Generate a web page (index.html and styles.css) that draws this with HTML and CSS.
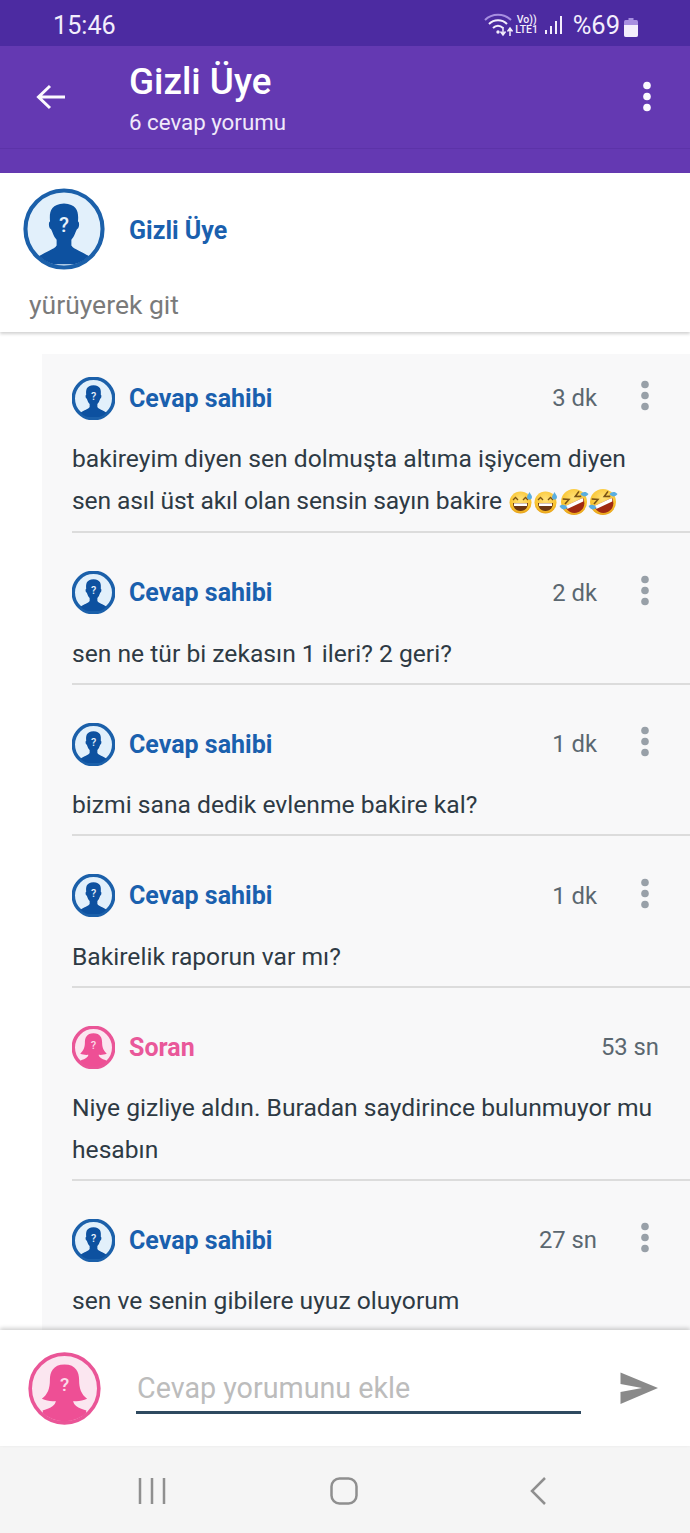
FILE: index.html
```html
<!DOCTYPE html>
<html lang="tr">
<head>
<meta charset="utf-8">
<title>Gizli Üye</title>
<link rel="stylesheet" href="styles.css">
</head>
<body>
<svg class="defs" width="0" height="0" aria-hidden="true">
  <defs>
    <clipPath id="c-in"><circle cx="50" cy="50" r="45"/></clipPath>
    <symbol id="male" viewBox="0 0 100 100">
      <circle class="ring" cx="50" cy="50" r="47" fill="#e2f0fb" stroke="#1b60aa"/>
      <path clip-path="url(#c-in)" fill="#0d51a0" d="M20 83C28 77 38 75 41 70L41 63C37 59 36 53 34 50C31 49 31 41 33 41C32 30 33 20 50 19C67 20 68 30 67 41C69 41 69 49 66 50C64 53 63 59 59 63L59 70C62 75 72 77 80 83L84 88C74 95 62 93 50 93C38 93 26 95 16 88Z"/>
      <text x="50" y="54" class="q" font-size="25">?</text>
    </symbol>
    <symbol id="female" viewBox="0 0 100 100">
      <circle class="ring" cx="50" cy="50" r="47" fill="#fbe6f0" stroke="#ea5597"/>
      <path clip-path="url(#c-in)" fill="#ee4f95" d="M50 17C66 17 70 28 70 38C70 50 73 58 81 64C75 67 67 68 62 67C62 72 68 77 80 80L76 100L24 100L20 80C32 77 38 72 38 67C33 68 25 67 19 64C27 58 30 50 30 38C30 28 34 17 50 17Z"/>
      <text x="50" y="54" class="q q-f" font-size="26">?</text>
    </symbol>
    <symbol id="dots" viewBox="0 0 8 32">
      <circle cx="4" cy="4.500" r="3.800"/><circle cx="4" cy="15.500" r="3.800"/><circle cx="4" cy="26.500" r="3.800"/>
    </symbol>
    <radialGradient id="gold" cx="50%" cy="35%" r="70%">
      <stop offset="0" stop-color="#ffe27a"/><stop offset="0.7" stop-color="#f9c32e"/><stop offset="1" stop-color="#e09512"/>
    </radialGradient>
    <symbol id="sweat" viewBox="0 0 24 24">
      <circle cx="11.500" cy="12.500" r="11" fill="url(#gold)"/>
      <path d="M4 10L6.500 7.500L9 10M14 10L16.500 7.500L19 10" fill="none" stroke="#7a5214" stroke-width="1.300"/>
      <path d="M4 13H19C19 18.500 15.500 21 11.500 21C7.500 21 4 18.500 4 13Z" fill="#6b3612"/>
      <path d="M5 13.300H18V16H5Z" fill="#fff"/>
      <path d="M20.500 2C21.800 4.500 23 5.500 23 7.200A2.500 2.500 0 0 1 18 7.200C18 5.500 19.200 4.500 20.500 2Z" fill="#5aaee0"/>
    </symbol>
    <symbol id="rofl" viewBox="0 0 30 30">
      <circle cx="15" cy="15" r="13" fill="url(#gold)"/>
      <g transform="rotate(-25 15 15)">
        <path d="M6 7.500L11.500 10.500L6 13M24 7.500L18.500 10.500L24 13" fill="none" stroke="#7a5214" stroke-width="1.600"/>
        <path d="M5 15H25C25 22 20.500 26 15 26C9.500 26 5 22 5 15Z" fill="#a02a12"/>
        <path d="M5.500 15H24.500C24.500 16.500 24 18 23.500 18.500H6.500C6 18 5.500 16.500 5.500 15Z" fill="#fff"/>
      </g>
      <path d="M0.500 19C3.500 16.500 7 18 8.500 20.500C6 23.500 2.500 23 0.500 19Z" fill="#5aaee0"/>
      <path d="M29.500 7C27 4 23.500 4.500 21.500 7C23.500 10 27.500 10.500 29.500 7Z" fill="#5aaee0"/>
    </symbol>
  </defs>
</svg>

<div class="phone">
  <header class="appbar">
    <div class="status">
      <span class="clock">15:46</span>
      <div class="status-right">
        <svg class="wifi" viewBox="0 0 30 24"><path d="M1 7C8 0 20 0 27 7" fill="none" stroke="#a78fe0" stroke-width="2"/><path d="M5 11C10 6 18 6 23 11M9 15C12 12 16 12 19 15" fill="none" stroke="#f3eefc" stroke-width="2"/><circle cx="14" cy="19" r="1.700" fill="#f3eefc"/><path d="M19 14V21M16.500 18.500L19 22L21.500 18.500M26 23V16M23.500 18.500L26 15L28.500 18.500" fill="none" stroke="#f3eefc" stroke-width="1.500"/></svg>
        <span class="net"><span>Vo))</span><span>LTE1</span></span>
        <svg class="signal" viewBox="0 0 18 20"><rect x="0" y="15" width="2" height="4" fill="#f3eefc"/><rect x="5" y="11" width="2" height="8" fill="#f3eefc"/><rect x="10" y="6" width="2" height="13" fill="#f3eefc"/><rect x="15" y="1" width="2" height="18" fill="#f3eefc"/></svg>
        <span class="pct">%69</span>
        <svg class="batt" viewBox="0 0 14 20"><path d="M4.500 1H9.500V3H12.500Q14 3 14 5V18Q14 20 12 20H2Q0 20 0 18V5Q0 3 1.500 3H4.500Z" fill="#a78fe0"/><path d="M0 8H14V18Q14 20 12 20H2Q0 20 0 18Z" fill="#f3eefc"/></svg>
      </div>
    </div>
    <div class="toolbar">
      <svg class="back" viewBox="0 0 30 26"><path d="M29 13H3M14 2L2.500 13L14 24" fill="none" stroke="#fbf9fe" stroke-width="3"/></svg>
      <div class="titles">
        <div class="title">Gizli Üye</div>
        <div class="subtitle">6 cevap yorumu</div>
      </div>
      <svg class="bar-more" fill="#fbf9fe"><use href="#dots"/></svg>
    </div>
    <div class="band"></div>
  </header>

  <section class="post">
    <div class="post-head">
      <svg class="av-lg"><use href="#male"/></svg>
      <span class="name name-post">Gizli Üye</span>
    </div>
    <p class="post-text">yürüyerek git</p>
  </section>

  <main class="thread">
    <ul class="list">
      <li class="item">
        <div class="item-head">
          <svg class="av"><use href="#male"/></svg>
          <span class="name">Cevap sahibi</span>
          <span class="time">3 dk</span>
          <svg class="more"><use href="#dots"/></svg>
        </div>
        <p class="body">bakireyim diyen sen dolmuşta altıma işiycem diyen <span class="tight">sen asıl üst akıl olan sensin sayın bakire</span> <span class="emojis"><svg class="em"><use href="#sweat"/></svg><svg class="em"><use href="#sweat"/></svg><svg class="em-r"><use href="#rofl"/></svg><svg class="em-r"><use href="#rofl"/></svg></span></p>
      </li>
      <li class="item">
        <div class="item-head">
          <svg class="av"><use href="#male"/></svg>
          <span class="name">Cevap sahibi</span>
          <span class="time">2 dk</span>
          <svg class="more"><use href="#dots"/></svg>
        </div>
        <p class="body">sen ne tür bi zekasın 1 ileri? 2 geri?</p>
      </li>
      <li class="item">
        <div class="item-head">
          <svg class="av"><use href="#male"/></svg>
          <span class="name">Cevap sahibi</span>
          <span class="time">1 dk</span>
          <svg class="more"><use href="#dots"/></svg>
        </div>
        <p class="body">bizmi sana dedik evlenme bakire kal?</p>
      </li>
      <li class="item">
        <div class="item-head">
          <svg class="av"><use href="#male"/></svg>
          <span class="name">Cevap sahibi</span>
          <span class="time">1 dk</span>
          <svg class="more"><use href="#dots"/></svg>
        </div>
        <p class="body">Bakirelik raporun var mı?</p>
      </li>
      <li class="item">
        <div class="item-head">
          <svg class="av"><use href="#female"/></svg>
          <span class="name name-f">Soran</span>
          <span class="time">53 sn</span>
        </div>
        <p class="body">Niye gizliye aldın. Buradan saydirince bulunmuyor mu hesabın</p>
      </li>
      <li class="item">
        <div class="item-head">
          <svg class="av"><use href="#male"/></svg>
          <span class="name">Cevap sahibi</span>
          <span class="time">27 sn</span>
          <svg class="more"><use href="#dots"/></svg>
        </div>
        <p class="body">sen ve senin gibilere uyuz oluyorum</p>
      </li>
    </ul>
  </main>

  <footer class="composer">
    <svg class="av-me"><use href="#female"/></svg>
    <div class="field">Cevap yorumunu ekle</div>
    <svg class="send" viewBox="0 0 38 32"><path d="M0.500 0.500L38 16L0.500 32V20L22 16L0.500 12Z" fill="#8a8a8a"/></svg>
  </footer>

  <nav class="navbar">
    <svg class="nav-recent" viewBox="0 0 28 28"><path d="M2 1V27M14 1V27M26 1V27" stroke="#8f8f8f" stroke-width="2.500" fill="none"/></svg>
    <svg class="nav-home" viewBox="0 0 28 28"><rect x="1.500" y="1.500" width="25" height="25" rx="8" fill="none" stroke="#8f8f8f" stroke-width="2.500"/></svg>
    <svg class="nav-back" viewBox="0 0 16 28"><path d="M15 1L2 14L15 27" fill="none" stroke="#8f8f8f" stroke-width="2.500"/></svg>
  </nav>
</div>
</body>
</html>
```
FILE: styles.css
```css
* { box-sizing: border-box; }
html, body { margin: 0; padding: 0; }
body { font-family: Roboto, "Noto Sans", sans-serif; background: #fff; }
.defs { position: absolute; }
.q { fill: #e8f2fb; text-anchor: middle; font-family: Roboto, sans-serif; font-weight: 500; }
.q-f { fill: #fbdbe9; }
.ring { stroke-width: var(--ring, 5); }

.phone { width: 690px; height: 1533px; display: flex; flex-direction: column; overflow: hidden; background: #fff; }

.appbar { flex: none; background: #6439b2; }
.status { height: 46px; background: #4c2ba1; display: flex; align-items: center; justify-content: space-between; padding: 4px 52px 0 53px; color: #f3eefc; }
.clock { font-size: 25.200px; }
.status-right { display: flex; align-items: center; }
.wifi { width: 30px; height: 24px; }
.net { display: flex; flex-direction: column; align-items: center; font-size: 10.500px; line-height: 10.500px; font-weight: 500; margin-left: 1px; width: 24px; }
.signal { width: 18px; height: 20px; margin-left: 6px; }
.pct { font-size: 25.500px; margin-left: 10px; }
.batt { width: 14px; height: 20px; margin-left: 4px; margin-top: 3px; }

.toolbar { height: 102px; display: flex; align-items: center; padding: 0 39px 0 36px; }
.back { width: 30px; height: 26px; flex: none; margin-right: 63px; }
.titles { flex: 1; color: #fff; }
.title { font-size: 36.800px; line-height: 50px; font-weight: 500; }
.subtitle { font-size: 22.300px; line-height: 30px; color: #f0e9fa; }
.bar-more { width: 8px; height: 32px; flex: none; }
.band { height: 25px; border-top: 1px solid #5c33a8; }

.post { flex: none; height: 159px; padding: 15px 23px 0; background: #fff; box-shadow: 0 2px 3px rgba(0,0,0,.18); position: relative; }
.post-head { display: flex; align-items: center; gap: 24px; }
.av-lg { width: 82px; height: 82px; flex: none; --ring: 5; }
.name { font-size: 25px; font-weight: 700; color: #1a60ae; }
.name-post { margin-top: 2px; }
.name-f { color: #e9589a; }
.post-text { margin: 18px 0 0 6px; font-size: 26.500px; line-height: 34px; color: #7a7a7a; }

.thread { flex: 1; min-height: 0; overflow: hidden; padding: 22px 0 0 42px; }
.list { list-style: none; margin: 0; padding: 0 0 0 30px; background: #f8f8f9; }
.item { padding: 38px 31px 8.500px 0; border-bottom: 2px solid #dcdcdc; }
.item:first-child { padding-top: 22.500px; padding-bottom: 10px; }
.item:last-child { border-bottom: 0; }
.item-head { display: flex; align-items: center; height: 43px; }
.av { width: 43px; height: 43px; flex: none; margin-right: 14px; --ring: 8; }
.time { margin-left: auto; font-size: 23.800px; color: #5b6770; }
.more { width: 8px; height: 32px; flex: none; margin: -4px 10px 0 44px; fill: #98a0a8; }
.body { margin: 18.500px 0 0; font-size: 24.650px; line-height: 41.500px; color: #2e3a44; }
.tight { letter-spacing: -0.140px; }
.emojis { display: inline-flex; align-items: center; vertical-align: -5px; margin-left: 1px; }
.em { width: 24px; height: 24px; margin-right: 1px; }
.em-r { width: 30px; height: 30px; margin-right: -1px; }

.composer { flex: none; height: 116px; display: flex; align-items: flex-start; padding: 22px 32px 0 28px; background: #fff; box-shadow: 0 -2px 4px rgba(0,0,0,.18); position: relative; }
.av-me { width: 73px; height: 73px; flex: none; margin-right: 35px; --ring: 5; }
.field { width: 446px; height: 40px; margin-top: 22px; padding: 0 0 0 1px; border-bottom: 3.500px solid #2f4a60; font-size: 28.700px; line-height: 28px; color: #bcbcbc; white-space: nowrap; }
.send { width: 38px; height: 32px; flex: none; margin: 20px 0 0 39px; }

.navbar { flex: none; height: 87px; background: #f5f5f5; display: flex; align-items: center; padding: 3px 144px 0 138px; justify-content: space-between; }
.nav-recent { width: 28px; height: 28px; }
.nav-home { width: 28px; height: 28px; margin-right: 8px; }
.nav-back { width: 16px; height: 28px; }
```
